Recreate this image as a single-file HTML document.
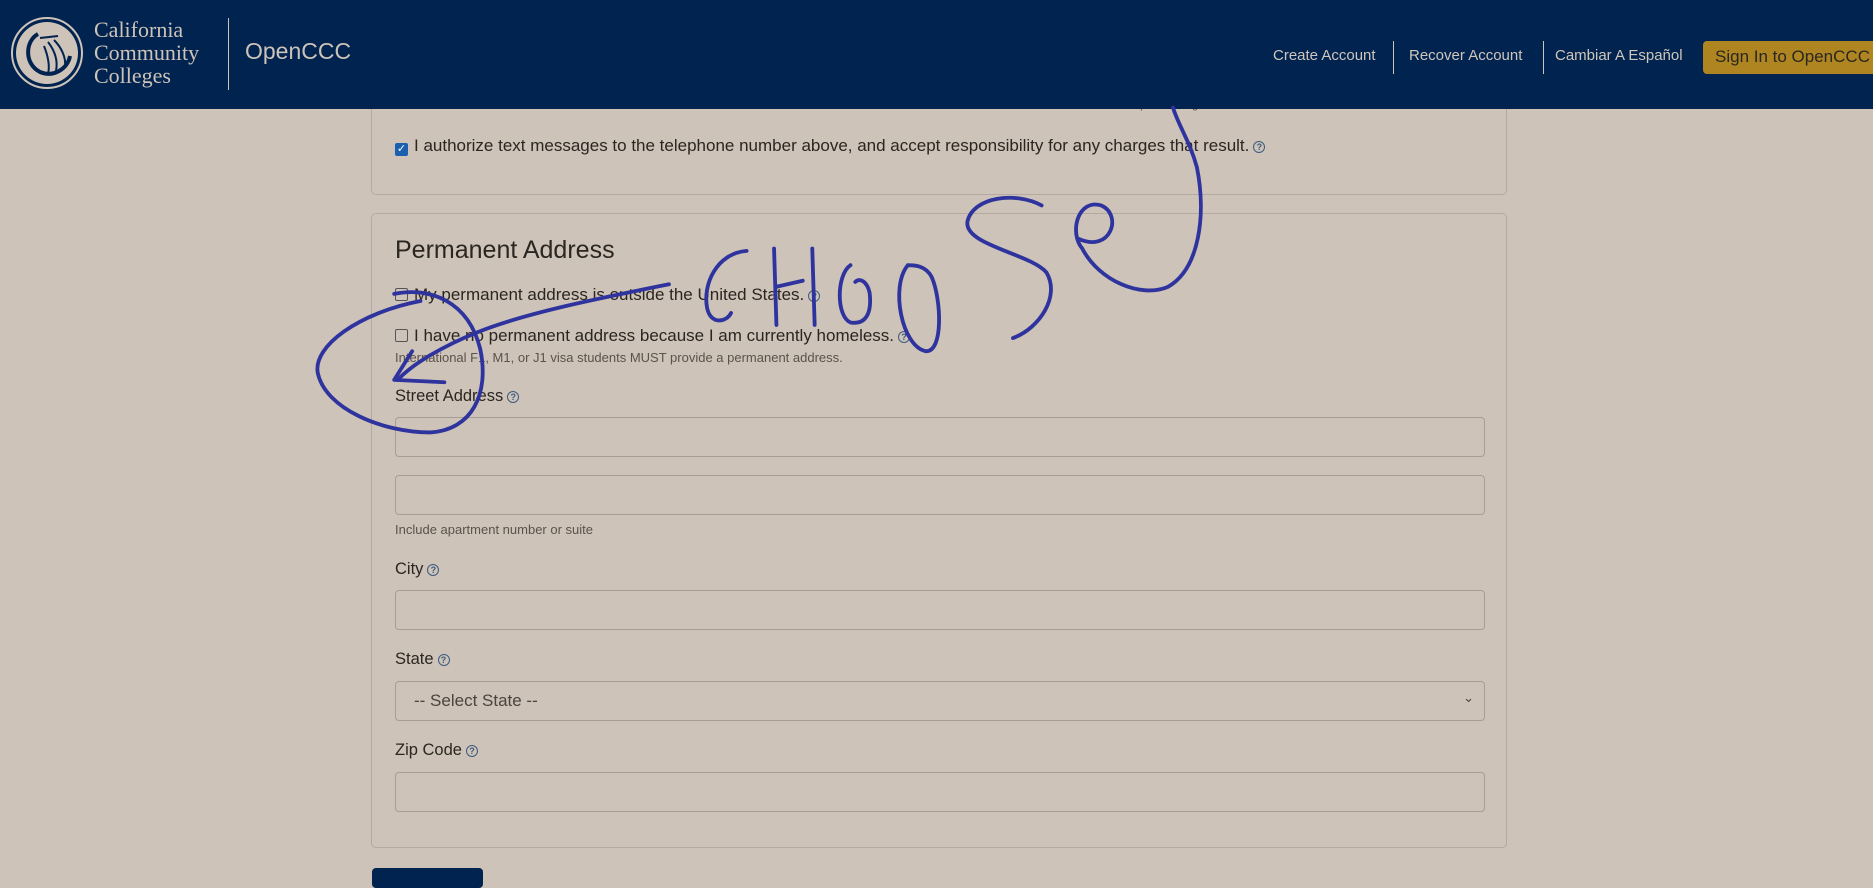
<!DOCTYPE html>
<html><head><meta charset="utf-8"><style>
*{box-sizing:border-box}
body{margin:0;width:1873px;height:878px;overflow:hidden;background:#cdc3b9;font-family:"Liberation Sans",sans-serif;color:#2b2620;position:relative}
.hdr{position:absolute;left:0;top:0;width:1873px;height:109px;background:#00234f;z-index:5}
.abs{position:absolute}
.card{position:absolute;left:371px;width:1136px;border:1px solid #b3aaa1;border-radius:5px;background:#cdc3b9}
.lbl{position:absolute;left:395px;font-size:16.5px;color:#2b2620}
.inp{position:absolute;left:395px;width:1090px;height:40px;border:1px solid #a69d94;border-radius:4px;background:#cdc3b9}
.q{display:inline-block;width:12px;height:12px;border:1.5px solid #3d5a80;border-radius:50%;font-size:9px;line-height:10px;text-align:center;color:#3d5a80;font-weight:bold;vertical-align:1px;margin-left:4px}
.cb{display:inline-block;width:13px;height:13px;border:1px solid #555;border-radius:2px;vertical-align:-1px;margin-right:6px;background:#cdc3b9}
.small{position:absolute;left:395px;font-size:13px;color:#5a534b}
.nav{position:absolute;top:47px;font-size:15px;color:#cfc6bc}
</style></head><body>
<div class="hdr">
 <svg class="abs" style="left:10px;top:16px" width="74" height="74" viewBox="0 0 74 74">
  <circle cx="37" cy="37" r="35" fill="none" stroke="#cdc3b9" stroke-width="2"/>
  <circle cx="37" cy="37" r="31" fill="#cdc3b9"/>
  <path d="M28 18 C15 25 14 48 30 56 C44 62 58 52 60 40" fill="none" stroke="#00234f" stroke-width="4"/>
  <path d="M30 22 L48 20 M38 26 C45 35 48 45 46 55 M44 24 C52 32 56 42 55 50 M34 30 C38 40 40 50 38 58" fill="none" stroke="#00234f" stroke-width="2"/>
 </svg>
 <div class="abs" style="left:94px;top:18px;font-family:'Liberation Serif',serif;font-size:22px;line-height:23px;color:#cdc3b9">California<br>Community<br>Colleges</div>
 <div class="abs" style="left:228px;top:18px;width:1px;height:72px;background:#cdc3b9"></div>
 <div class="abs" style="left:245px;top:38px;font-size:23px;color:#cdc3b9">OpenCCC</div>
 <div class="nav" style="left:1273px">Create Account</div>
 <div class="abs" style="left:1393px;top:41px;width:1px;height:33px;background:#cdc3b9"></div>
 <div class="nav" style="left:1409px">Recover Account</div>
 <div class="abs" style="left:1543px;top:41px;width:1px;height:33px;background:#cdc3b9"></div>
 <div class="nav" style="left:1555px">Cambiar A Español</div>
 <div class="abs" style="left:1703px;top:41px;width:175px;height:33px;background:#ae8520;border-radius:4px;font-size:17px;color:#2b2620;padding:6px 0 0 12px">Sign In to OpenCCC</div>
</div>
<div class="card" style="top:90px;height:105px;border-top:none;border-radius:0 0 5px 5px"></div>
<div class="abs" style="left:1134px;top:103px;font-size:11px;color:#5a534b;z-index:1;height:9px;overflow:hidden;line-height:4px">up to four digits</div>
<div class="abs" style="left:395px;top:136px;font-size:17px"><span class="cb" style="background:#1b5fb0;border-color:#1b5fb0;color:#fff;font-size:11px;line-height:11px;text-align:center">✓</span>I authorize text messages to the telephone number above, and accept responsibility for any charges that result.<span class="q">?</span></div>
<div class="card" style="top:213px;height:635px"></div>
<div class="abs" style="left:395px;top:236px;font-size:25px;color:#2b2620">Permanent Address</div>
<div class="abs" style="left:395px;top:285px;font-size:17px"><span class="cb"></span>My permanent address is outside the United States.<span class="q">?</span></div>
<div class="abs" style="left:395px;top:326px;font-size:17px"><span class="cb"></span>I have no permanent address because I am currently homeless.<span class="q">?</span></div>
<div class="small" style="top:350px">International F1, M1, or J1 visa students MUST provide a permanent address.</div>
<div class="lbl" style="top:387px">Street Address<span class="q">?</span></div>
<div class="inp" style="top:417px"></div>
<div class="inp" style="top:475px"></div>
<div class="small" style="top:522px">Include apartment number or suite</div>
<div class="lbl" style="top:560px">City<span class="q">?</span></div>
<div class="inp" style="top:590px"></div>
<div class="lbl" style="top:650px">State<span class="q">?</span></div>
<div class="inp" style="top:681px;font-size:17px;color:#4a443d;padding:9px 0 0 18px">-- Select State --<span style="position:absolute;right:10px;top:8px;font-size:13px">⌄</span></div>
<div class="lbl" style="top:741px">Zip Code<span class="q">?</span></div>
<div class="inp" style="top:772px"></div>
<div class="abs" style="left:372px;top:868px;width:111px;height:20px;background:#00234f;border-radius:4px"></div>
<svg class="abs" style="left:0;top:0;z-index:6" width="1873" height="878" viewBox="0 0 1568 735">
<g fill="none" stroke="#2e339e" stroke-width="3.2" stroke-linecap="round" stroke-linejoin="round">
<path d="M560,238 C500,250 440,262 400,278 C370,290 345,305 333,318"/>
<path d="M345,294 L330,318 L372,320"/>
<path d="M330,246 C360,240 392,252 402,292 C410,330 395,360 360,362 C320,362 272,342 266,312 C262,290 300,262 352,252"/>
<path d="M625,210 C600,212 588,238 592,258 C595,272 608,270 612,262"/>
<path d="M648,208 L650,272 M650,240 L672,235 M680,208 L682,272"/>
<path d="M712,222 C700,230 700,265 712,270 C725,272 730,262 728,245 C726,236 720,232 716,236"/>
<path d="M760,222 C745,240 755,290 775,294 C790,295 788,250 780,232 C775,222 765,222 760,222"/>
<path d="M872,172 C850,160 815,165 810,185 C806,205 862,212 876,228 C888,248 870,275 848,283"/>
<path d="M903,200 C930,212 940,180 922,172 C902,166 895,195 906,208 C920,235 955,250 978,240 C1004,225 1010,180 1002,140 C996,118 986,104 982,90"/>
</g></svg>
</body></html>
